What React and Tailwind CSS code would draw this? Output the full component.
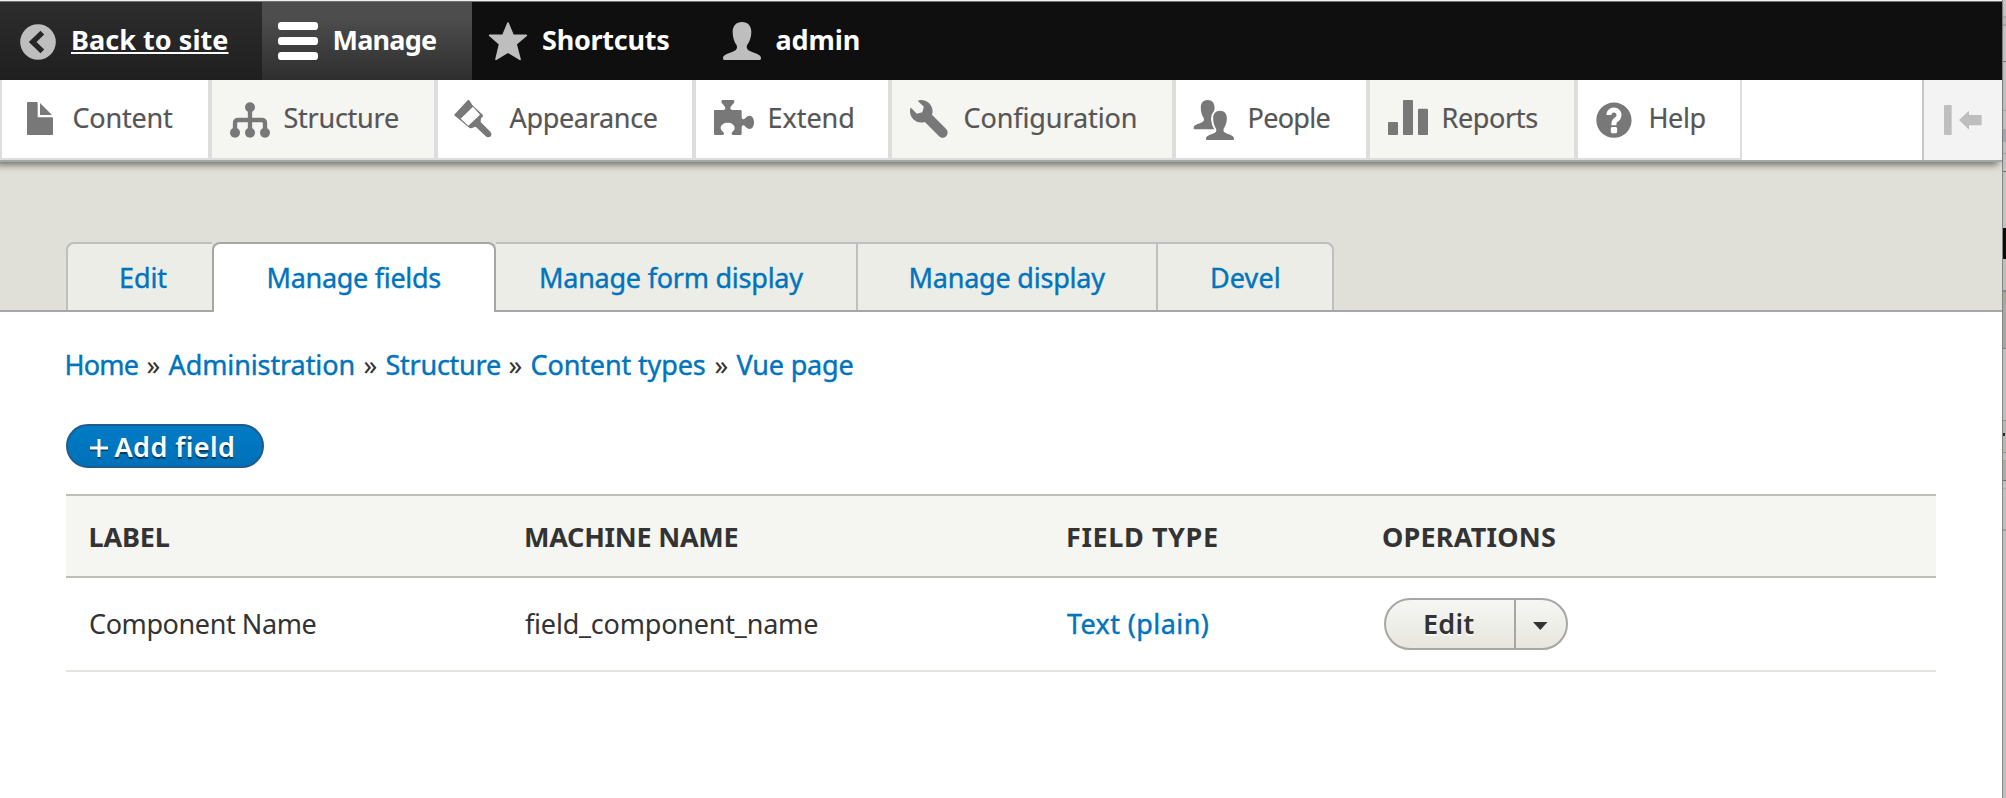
const PERSON =
  "M906 66c18 0 28 12 28 30 0 16-6 31-13 40-3 8 1 14 10 18 20 8 32 10 32 21 0 4-1 5-5 5H854c-4 0-5-2-5-5 0-11 13-13 32-21 9-4 12-10 9-18-7-9-12-24-12-40 0-18 10-30 28-30z";

function Icon({ box, className, children }) {
  return (
    <svg viewBox={box} className={"shrink-0 " + className} fill="currentColor">
      {children}
    </svg>
  );
}

function BarItem({ className, label, labelClass, icon }) {
  return (
    <a className={"flex h-[78px] shrink-0 text-[#bebebe] " + className}>
      {icon}
      <span className={"block h-[75px] whitespace-pre font-bold leading-[75px] text-white " + labelClass}>{label}</span>
    </a>
  );
}

function TrayItem({ className, label, labelClass, icon }) {
  return (
    <a className={"flex h-20 shrink-0 border-b-2 border-[#ddd] text-[#787878] " + className}>
      {icon}
      <span className={"ml-[0.5px] block h-[76px] whitespace-pre leading-[76px] text-[#565656] [-webkit-text-stroke:0.2px] " + labelClass}>
        {label}
      </span>
    </a>
  );
}

function Tab({ className, label }) {
  return (
    <a className={"block whitespace-pre border-t-2 leading-[68px] text-[#0074bd] [-webkit-text-stroke:0.4px] " + className}>
      {label}
    </a>
  );
}

const TABS = [
  { label: "Edit", className: "mb-0.5 h-[68px] w-[146px] rounded-tl-[8px] border-l-2 border-[#bfbfbf] bg-[#ecede6] pl-[51px] tracking-[-0.1px]" },
  { label: "Manage fields", className: "h-[70px] w-[284px] rounded-t-[8px] border-x-2 border-[#a6a6a6] bg-white pl-[52.5px] tracking-[-0.3px]" },
  { label: "Manage form display", className: "mb-0.5 h-[68px] w-[362px] border-r-2 border-[#bfbfbf] bg-[#ecede6] pl-[43px] tracking-[-0.24px]" },
  { label: "Manage display", className: "mb-0.5 h-[68px] w-[300px] border-r-2 border-[#bfbfbf] bg-[#ecede6] pl-[50.5px] tracking-[-0.22px]" },
  { label: "Devel", className: "mb-0.5 h-[68px] w-[176px] rounded-tr-[8px] border-r-2 border-[#bfbfbf] bg-[#ecede6] pl-[52px] tracking-[0.1px]" },
];

const CRUMBS = [
  { label: "Home", className: "w-[82px] tracking-[-0.76px]" },
  { label: "»", sep: true, className: "w-[22px]" },
  { label: "Administration", className: "w-[195px] tracking-[-0.1px]" },
  { label: "»", sep: true, className: "w-[22px]" },
  { label: "Structure", className: "w-[123px] tracking-[-0.25px]" },
  { label: "»", sep: true, className: "w-[22px]" },
  { label: "Content types", className: "w-[184px] tracking-[-0.13px]" },
  { label: "»", sep: true, className: "w-[22px]" },
  { label: "Vue page", className: "tracking-[-0.17px]" },
];

/* Slices of the window that lies behind the browser's right edge. */
const STRIP = [
  "h-[16px] bg-[#c4c4c4]",
  "h-[2px] bg-[#aaaaaa]",
  "h-[6px] bg-[#b9b9b9]",
  "h-[2px] bg-[#a6a6a6]",
  "h-[35px] bg-[#c4c4c4]",
  "h-[1px] bg-[#777777]",
  "h-[48px] bg-[#c2c2c2]",
  "h-[1px] bg-[#a8a8a8]",
  "h-[18px] bg-[#c2c2c2]",
  "h-[13px] bg-[#a6a8b4]",
  "h-[11px] bg-[#c2c2c2]",
  "h-[1px] bg-[#a0a0a0]",
  "h-[17px] bg-[#c2c2c2]",
  "h-[1px] bg-[#707070]",
  "h-[56px] bg-[#c2c2c2]",
  "h-[31px] bg-[#0b0b0b]",
  "h-[31px] bg-[#bdbdbd]",
  "h-[2px] bg-[#888888]",
  "h-[56px] bg-[#a6a79e]",
  "h-[1px] bg-[#808080]",
  "h-[71px] bg-[#c0c0c0]",
  "h-[1px] bg-[#929292]",
  "h-[12px] bg-[#b8b9b3]",
  "h-[3px] w-[2px] bg-[#2c2c2c]",
  "h-[16px] bg-[#b8b9b3]",
  "h-[1px] bg-[#909090]",
  "h-[7px] bg-[#bdbdbd]",
  "h-[1px] bg-[#a0a0a0]",
  "h-[19px] bg-[#acada4]",
  "h-[1px] bg-[#707070]",
  "h-[7px] bg-[#c0c0c0]",
  "h-[1px] bg-[#aeaeae]",
  "h-[40px] bg-[#c0c0c0]",
  "h-[2px] bg-[#a0a0a0]",
  "h-[268px] bg-[#c0c0c0]",
];

export default function App() {
  return (
    <div className="flex h-[798px] w-[2006px] overflow-hidden bg-[#b8b9b3] font-['Noto_Sans','Open_Sans',sans-serif] text-[27px] text-[#333]">
      <div className="flex w-[2002px] shrink-0 flex-col bg-white">
        <header className="relative shrink-0 shadow-[-4px_3px_7px_rgba(0,0,0,0.5)]">
          <div className="h-px bg-[#eef0ef]" />
          <div className="h-px bg-[#717573]" />
          <nav className="flex h-[78px] bg-[#0f0f0f]">
            <BarItem
              className="w-[262px] bg-linear-to-b from-[#2d2d2d] to-[#1f1f1f]"
              label="Back to site"
              labelClass="ml-px tracking-[0.05px] underline decoration-2 underline-offset-[2px] [text-decoration-skip-ink:none]"
              icon={
                <Icon box="0 6 210 234" className="h-[78px] w-[70px]">
                  <circle cx="114" cy="126" r="53.5" />
                  <path d="M127 98L98 126L127 154" fill="none" stroke="#262626" strokeWidth="16" />
                </Icon>
              }
            />
            <BarItem
              className="w-[210px] bg-linear-to-b from-[#4d4d4d] from-20% to-[#2e2e2e]"
              label="Manage"
              labelClass="ml-[0.5px] tracking-[-0.8px]"
              icon={
                <Icon box="786 6 210 234" className="h-[78px] w-[70px] text-white">
                  <rect x="834" y="66" width="120" height="24" rx="10" />
                  <rect x="834" y="111" width="120" height="24" rx="10" />
                  <rect x="834" y="156" width="120" height="24" rx="10" />
                </Icon>
              }
            />
            <BarItem
              className="w-[222px]"
              label="Shortcuts"
              labelClass="tracking-[-0.25px]"
              icon={
                <Icon box="96 6 210 234" className="h-[78px] w-[70px]">
                  <path
                    d="M204 69L219 105L259 106L228 132L240 178L204 156L168 178L179 132L149 106L189 105Z"
                    stroke="currentColor"
                    strokeWidth="5"
                    strokeLinejoin="round"
                  />
                </Icon>
              }
            />
            <BarItem
              className="w-[200px]"
              label="admin"
              labelClass="ml-[0.5px] tracking-[-0.1px]"
              icon={
                <Icon box="762 6 243 234" className="h-[78px] w-[81px]">
                  <path d={PERSON} />
                </Icon>
              }
            />
          </nav>
          <nav className="flex h-20 bg-white">
            <TrayItem
              className="w-[212px] border-r-4 border-l-2"
              label="Content"
              labelClass="tracking-[-0.2px]"
              icon={
                <Icon box="6 240 210 234" className="h-[78px] w-[70px]">
                  <path d="M84 306H110q3 0 3 3V352H156q3 0 3 3V402q0 3-3 3H84q-3 0-3-3V309q0-3 3-3z" />
                  <path d="M120 309L156 345H120z" />
                </Icon>
              }
            />
            <TrayItem
              className="w-[226px] border-r-4 bg-[#f5f5f2]"
              label="Structure"
              labelClass="tracking-[-0.25px]"
              icon={
                <Icon box="636 240 213 234" className="h-[78px] w-[71px]">
                  <circle cx="750" cy="322" r="15" />
                  <circle cx="705" cy="398" r="15" />
                  <circle cx="750" cy="398" r="15" />
                  <circle cx="795" cy="398" r="15" />
                  <path
                    d="M750 322V398M705 398V370q0-10 10-10H785q10 0 10 10V398"
                    fill="none"
                    stroke="currentColor"
                    strokeWidth="13"
                  />
                </Icon>
              }
            />
            <TrayItem
              className="w-[258px] border-r-4"
              label="Appearance"
              labelClass="tracking-[-0.33px]"
              icon={
                <Icon box="-6 240 213 234" className="h-[78px] w-[71px]">
                  <path
                    fillRule="evenodd"
                    d="M42 345L83 301Q86 299 89 302L97 315L128 344Q131 350 123 354L122 366L151 395Q157 402 153 408Q147 414 139 410L107 380L96 384Q90 387 85 381ZM99 320L62 356L85 377L120 344Z"
                  />
                </Icon>
              }
            />
            <TrayItem
              className="w-[196px] border-r-4"
              label="Extend"
              labelClass="tracking-[-0.05px]"
              icon={
                <Icon box="768 240 213 234" className="h-[78px] w-[71px]">
                  <path d="M824 330H850Q856 330 856 325C856 317 844 313 844 304Q844 300 849 300H878Q883 300 883 304C883 313 871 317 871 325Q871 330 877 330H901Q905 330 905 334V352Q905 358 910 358C916 358 918 347 929 347C937 347 942 356 942 367C942 378 937 387 929 387C918 387 916 376 910 376Q905 376 905 382V401Q905 405 901 405H880Q875 405 875 401C875 395 884 393 884 384C884 374 874 368 863 368C852 368 842 374 842 384C842 393 852 395 852 401Q852 405 847 405H826Q822 405 822 401V332Q822 330 824 330z" />
                </Icon>
              }
            />
            <TrayItem
              className="w-[284px] border-r-4 bg-[#f5f5f2]"
              label="Configuration"
              labelClass="tracking-[-0.1px]"
              icon={
                <Icon box="36 30 213 234" className="h-[78px] w-[71px]">
                  <path
                    transform="translate(90 90) scale(7.53)"
                    d="M14.416 11.586l-.01-.008v-.001l-5.656-5.656c.15-.449.252-.921.252-1.421 0-2.485-2.016-4.5-4.502-4.5-.505 0-.981.102-1.434.255l2.431 2.431-.588 2.196-2.196.588-2.445-2.445c-.162.464-.268.956-.268 1.475 0 2.486 2.014 4.5 4.5 4.5.5 0 .972-.102 1.421-.251l5.667 5.665c.781.781 2.047.781 2.828 0s.781-2.047 0-2.828z"
                  />
                </Icon>
              }
            />
            <TrayItem
              className="w-[194px] border-r-4"
              label="People"
              labelClass="tracking-[-0.69px]"
              icon={
                <Icon box="888 30 213 234" className="h-[78px] w-[71px]">
                  <path transform="translate(983 90) scale(.737 .77) translate(-906 -66)" d={PERSON} />
                  <path
                    transform="translate(1020 122) scale(.737 .77) translate(-906 -66)"
                    d={PERSON}
                    stroke="#fff"
                    strokeWidth="15"
                  />
                  <rect x="1026" y="164" width="14" height="12" fill="#fff" />
                  <path transform="translate(1020 122) scale(.737 .77) translate(-906 -66)" d={PERSON} />
                </Icon>
              }
            />
            <TrayItem
              className="w-[208px] border-r-4 bg-[#f5f5f2]"
              label="Reports"
              labelClass="tracking-[-0.36px]"
              icon={
                <Icon box="90 30 213 234" className="h-[78px] w-[71px]">
                  <rect x="144" y="156" width="30" height="39" rx="3" />
                  <rect x="189" y="90" width="30" height="105" rx="3" />
                  <rect x="234" y="116" width="30" height="79" rx="3" />
                </Icon>
              }
            />
            <TrayItem
              className="w-[164px] border-r-2"
              label="Help"
              labelClass="tracking-[-0.4px]"
              icon={
                <Icon box="714 30 210 234" className="h-[78px] w-[70px]">
                  <path
                    transform="translate(761.5 90) scale(7.55)"
                    d="M8.002 1c-3.868 0-7.002 3.134-7.002 7s3.134 7 7.002 7c3.865 0 7-3.134 7-7s-3.135-7-7-7zm3 5c0 .551-.16 1.085-.477 1.586l-.158.22c-.07.093-.189.241-.361.393-.168.148-.35.299-.545.447l-.203.189-.141.129-.096.17-.021.235v.63h-2.001v-.704c.026-.396.078-.73.204-.999.125-.269.271-.498.439-.688l.225-.21-.01-.015.176-.14.137-.128c.186-.139.357-.277.516-.417l.148-.18c.098-.152.168-.323.168-.518 0-.552-.447-1-1-1s-1.002.448-1.002 1h-2c0-1.657 1.343-3 3.002-3 1.656 0 3 1.343 3 3zm-1.75 6.619c0 .344-.281.625-.625.625h-1.25c-.345 0-.626-.281-.626-.625v-1.238c0-.344.281-.625.626-.625h1.25c.344 0 .625.281.625.625v1.238z"
                  />
                </Icon>
              }
            />
            <button className="ml-auto flex h-20 w-20 border-l-2 border-[#c8c8c8] bg-[#f3f3f3] text-[#bebebe]">
              <Icon box="132 240 234 240" className="h-20 w-[78px]">
                <rect x="192" y="315" width="23" height="90" rx="2" />
                <path d="M237 360L267 332V345H302Q305 345 305 348V373Q305 376 302 376H267V389Z" />
              </Icon>
            </button>
          </nav>
          <div className="h-0.5 bg-[#a5a7a2]" />
        </header>

        <div className="flex h-[150px] shrink-0 items-end bg-[#e0e0d8] shadow-[inset_0_-2px_0_#a6a6a6]">
          <div className="flex items-end pl-[66px]">
            {TABS.map((t) => (
              <Tab key={t.label} {...t} />
            ))}
          </div>
        </div>

        <main className="flex flex-col pl-[66px]">
          <div className="mt-[33px] ml-[-1.5px] flex h-10 whitespace-pre leading-10">
            {CRUMBS.map((c, i) => (
              <span
                key={i}
                className={(c.sep ? "text-[#333] " : "text-[#0074bd] [-webkit-text-stroke:0.4px] ") + c.className}
              >
                {c.label}
              </span>
            ))}
          </div>

          <button className="mt-[39px] flex h-11 w-[198px] items-center rounded-full border-2 border-[#1e5c90] bg-linear-to-b from-[#007bc6] to-[#0071b8] pl-[22px] text-white">
            <svg viewBox="0 0 18 18" className="mt-[3px] size-[18px] overflow-visible" fill="none" strokeWidth="3">
              <path d="M0 10.5H18M9 1.5V19.5" stroke="#0a3c5f" />
              <path d="M0 9H18M9 0V18" stroke="#fff" />
            </svg>
            <span className="mt-px ml-[6.5px] whitespace-pre font-semibold leading-10 tracking-[0.43px] [text-shadow:0_2px_1px_rgba(0,0,0,0.5)]">
              Add field
            </span>
          </button>

          <table className="mt-[26px] w-[1870px] table-fixed border-separate border-spacing-0 whitespace-pre text-left">
            <thead>
              <tr className="bg-[#f5f5f2] leading-[79px]">
                <th className="h-[84px] w-[434px] border-y-2 border-[#bfbfba] p-0 pl-[22.5px] tracking-[-0.14px]">LABEL</th>
                <th className="w-[542px] border-y-2 border-[#bfbfba] p-0 pl-6 tracking-[-0.25px]">MACHINE NAME</th>
                <th className="w-[340px] border-y-2 border-[#bfbfba] p-0 pl-6 tracking-[0.6px]">FIELD TYPE</th>
                <th className="border-y-2 border-[#bfbfba] p-0 tracking-[0.2px]">OPERATIONS</th>
              </tr>
            </thead>
            <tbody>
              <tr className="leading-[92px]">
                <td className="h-[94px] border-b-2 border-[#e6e4df] p-0 pl-[23px] tracking-[-0.41px]">Component Name</td>
                <td className="border-b-2 border-[#e6e4df] p-0 pl-[25px] tracking-[-0.2px]">field_component_name</td>
                <td className="border-b-2 border-[#e6e4df] p-0 pl-[25px] tracking-[0.4px] text-[#0074bd] [-webkit-text-stroke:0.4px]">
                  Text (plain)
                </td>
                <td className="border-b-2 border-[#e6e4df] p-0 pl-[2px]">
                  <div className="flex h-[52px] w-[184px] rounded-full border-2 border-[#a6a6a6] bg-linear-to-b from-[#f6f6f3] to-[#e7e7df] leading-[48px]">
                    <a className="block w-[130px] border-r-2 border-[#a6a6a6] pl-[37px] font-semibold tracking-[0.25px] [text-shadow:0_2px_0_rgba(255,255,255,0.7)]">
                      Edit
                    </a>
                    <svg viewBox="0 0 50 48" className="h-12 w-[50px]" fill="#333">
                      <path d="M17 22H31.5L24.3 30z" />
                    </svg>
                  </div>
                </td>
              </tr>
            </tbody>
          </table>
        </main>
      </div>

      <div className="w-px shrink-0 bg-[#858585]" />
      <div className="flex w-[3px] shrink-0 flex-col">
        {STRIP.map((s, i) => (
          <div key={i} className={"shrink-0 " + s} />
        ))}
      </div>
    </div>
  );
}
